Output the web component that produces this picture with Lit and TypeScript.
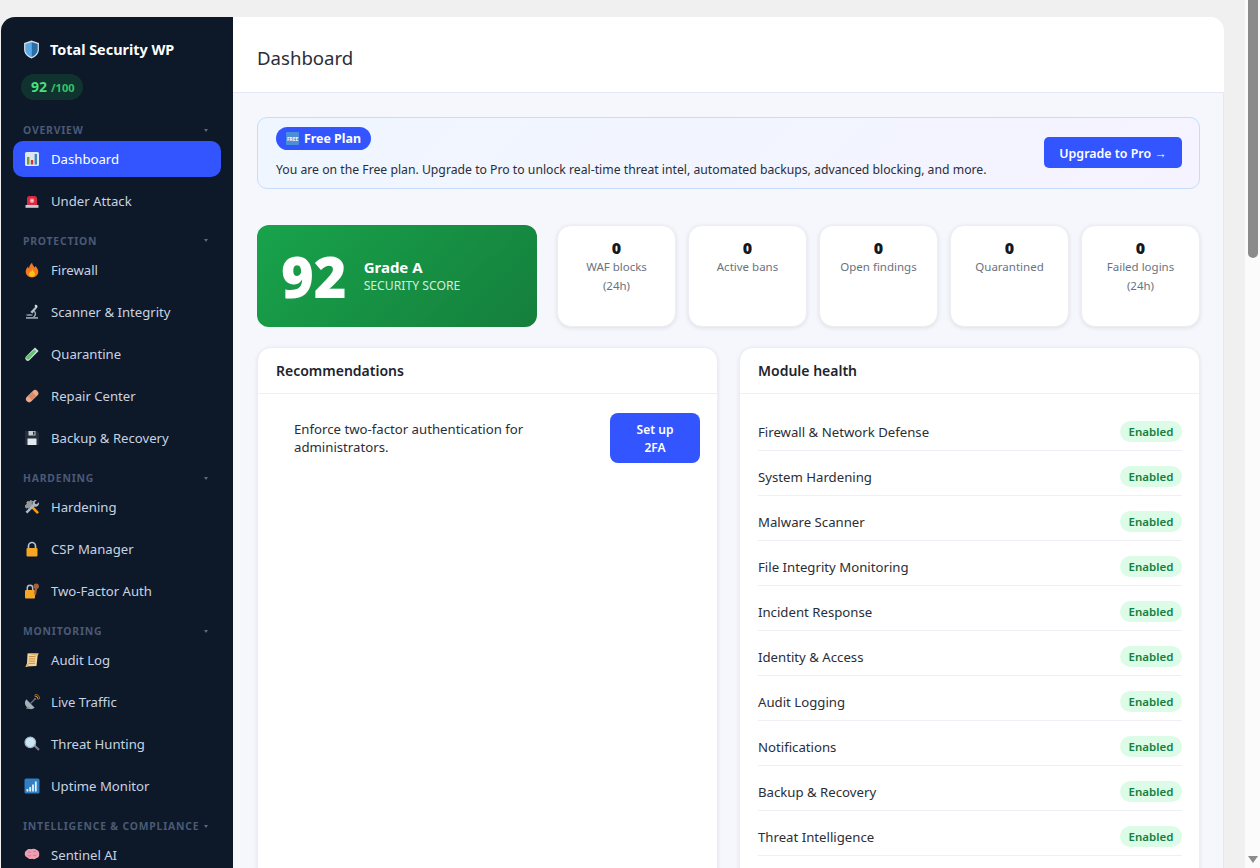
import { LitElement, html, css, svg } from 'lit';
import { customElement } from 'lit/decorators.js';

// small emoji-like icons, all on a 16x16 grid
const icons: Record<string, unknown> = {
  chart: svg`<rect x="1" y="1" width="14" height="14" rx="1.5" fill="#dfe6ee"/><rect x="3" y="6" width="2.4" height="7.5" fill="#6a9e3c"/><rect x="6.8" y="9" width="2.4" height="4.5" fill="#d9352c"/><rect x="10.6" y="3" width="2.4" height="10.5" fill="#3b88c9"/>`,
  siren: svg`<path d="M3 12V5.5A2.5 2.5 0 0 1 5.5 3h5A2.5 2.5 0 0 1 13 5.5V12z" fill="#d8293f"/><circle cx="8" cy="7.7" r="2.4" fill="#f08a97"/><circle cx="8" cy="7.7" r="1.1" fill="#fbd0d6"/><rect x="1.5" y="12" width="13" height="2.8" fill="#c5ccd3"/>`,
  fire: svg`<path d="M8 .8c.6 2.6 2 3.4 2.4 4.8.5-.4.8-1 .8-1.7 1.900 1.700 3.100 3.700 3.100 5.900 0 3.500-2.800 5.600-6.300 5.600S1.700 13.300 1.700 9.800c0-2.300 1.300-3.900 2.400-5.200.1.900.4 1.500 1 1.900C5.100 4.200 6.400 2.300 8 .8z" fill="#f4791f"/><path d="M8.100 7.200c.4 1.500 2.900 2.600 2.900 4.800 0 1.800-1.300 2.800-3 2.800s-3-1-3-2.800c0-1.400 1-2.200 1.700-3 .2.500.4.800.7 1 .1-1 .2-1.900.7-2.800z" fill="#fcc21b"/>`,
  scope: svg`<rect x="2" y="13" width="12" height="1.800" fill="#8e99a3"/><path d="M12 2l1.500 1.200-5 6.300L6.300 8z" fill="#b4bec6"/><rect x="10.800" y="1" width="2.600" height="2" transform="rotate(38 12 2)" fill="#dde3e8"/><path d="M10.500 6.500c2.200 1.800 2.300 4.700.3 6.500H8.600c2-1 3-3.500.9-5.400z" fill="#9aa5ae"/><ellipse cx="5.500" cy="11" rx="3.300" ry=".9" fill="#7d8891"/>`,
  tube: svg`<path d="M11 1.400l3.600 3.600-9 9a2.500 2.500 0 0 1-3.600-3.600z" fill="#d5dde4"/><path d="M10.500 3.500l1.800 1.800-7.300 8a2 2 0 0 1-2.700-2.700z" fill="#5fc46b"/>`,
  bandage: svg`<rect x=".6" y="5" width="14.800" height="6.400" rx="3.200" transform="rotate(-45 8 8)" fill="#f0a988"/><rect x="5" y="5.500" width="6" height="5.400" transform="rotate(-45 8 8)" fill="#d98a68"/>`,
  floppy: svg`<path d="M1 1h12l2 2v12H1z" fill="#232f3b"/><rect x="3.500" y="8.500" width="9" height="6.500" fill="#e4e9ee"/><rect x="4.500" y="1" width="7" height="4.500" fill="#c4ced6"/><rect x="9" y="1.700" width="1.500" height="3" fill="#232f3b"/>`,
  tools: svg`<path d="M2.200 3.800L4 1.800l11 11.400-1.900 1.900z" fill="#f49b1e"/><path d="M1 6.500L6.500 1l2.800 1.200-1.700 1.700 1.400 1.400L4.500 9.800l-1-1-1 1L1 8.300z" fill="#8d99a3"/><path d="M14.700 3.200l-2 2-1.600-.4-.4-1.600 2-2a3.300 3.300 0 0 0-4 4.400L1.500 12.800l1.800 1.800 7-7.100a3.300 3.300 0 0 0 4.400-4.300z" fill="#aeb9c2"/>`,
  lock: svg`<path d="M4.500 7.500V5a3.500 3.500 0 0 1 7 0v2.500" fill="none" stroke="#b7c1c9" stroke-width="1.700"/><rect x="2.500" y="7" width="11" height="8.500" rx="1" fill="#f5a623"/>`,
  lockkey: svg`<path d="M3.300 7.500V5a2.700 2.700 0 0 1 5.400 0v2.500" fill="none" stroke="#b7c1c9" stroke-width="1.500"/><rect x="1" y="7" width="10" height="8.500" rx="1" fill="#f5a623"/><circle cx="12.200" cy="3.200" r="2.700" fill="#a5603c"/><path d="M11 4.500L10 11l2 1.200 1.200-7.300z" fill="#a5603c"/>`,
  scroll: svg`<path d="M3.500 1.500h11l-.8 1.800-1.200 10.800-11 .4c1.300-1 1.400-1.800 1.500-3z" fill="#f3d59b"/><path d="M5 4.500h6.500M4.800 6.800h6.500M4.600 9.100h6.500M4.400 11.400h6.500" stroke="#c9904a"/><path d="M3.500 1.500h11l-.5 2H12" fill="#e2b56c"/><path d="M1 14.700c1-.6 1.500-1.500 1.500-3h2.300c0 1.500-.6 2.600-1.600 3z" fill="#e2b56c"/>`,
  dish: svg`<path d="M2.300 5.300a6 6 0 0 0 8.400 8.400z" fill="#a5b0b9"/><path d="M6.500 9.500l4-4" stroke="#6c7780" stroke-width="1.200"/><circle cx="11" cy="5" r="1.100" fill="#717c85"/><path d="M10.500 1.800a4 4 0 0 1 3.700 3.700" fill="none" stroke="#f0a030"/><path d="M11 .3a5 5 0 0 1 4.700 4.700" fill="none" stroke="#c9832a" stroke-width=".8"/><path d="M4 12l-2 2.800h5z" fill="#8d98a1"/>`,
  search: svg`<path d="M9.500 10l1.500-1.500 4.300 4.300a1.100 1.100 0 0 1-1.500 1.500z" fill="#78838c"/><circle cx="6.300" cy="6.300" r="5.300" fill="#c9e6f7" stroke="#aab5bd" stroke-width="1.200"/>`,
  signal: svg`<rect x=".5" y=".5" width="15" height="15" rx="1.500" fill="#2f7fc4"/><rect x="2.500" y="11" width="1.800" height="2.500" fill="#e8f1f8"/><rect x="5.300" y="9" width="1.800" height="4.500" fill="#e8f1f8"/><rect x="8.100" y="6.500" width="1.800" height="7" fill="#e8f1f8"/><rect x="10.900" y="3.500" width="1.800" height="10" fill="#e8f1f8"/>`,
  brain: svg`<path d="M2.500 3.500C4 1.800 6 2 7 2.300c1.500-.8 4-.8 5.500.5 2 .6 3 2.500 2.700 4.500.3 2-1 3.800-3 4-1.200 1.200-3 1.200-4 .5-1.600.5-3.500.2-4.500-1C1.500 10 .5 8.200.8 6.500c0-1.300.6-2.400 1.700-3z" fill="#ee9fb1"/><path d="M4 5.500c1-.8 2-.6 3 0M9 4.500c1.200-.5 2.500 0 3 1M3.500 8.500c1.200.7 2.500.5 3.500-.2M9 8c1 .8 2.300.8 3.500.2" fill="none" stroke="#c96c84" stroke-width=".8"/>`,
};

const nav = [
  { title: 'Overview', items: [['chart', 'Dashboard', true], ['siren', 'Under Attack']] },
  { title: 'Protection', items: [['fire', 'Firewall'], ['scope', 'Scanner & Integrity'], ['tube', 'Quarantine'], ['bandage', 'Repair Center'], ['floppy', 'Backup & Recovery']] },
  { title: 'Hardening', items: [['tools', 'Hardening'], ['lock', 'CSP Manager'], ['lockkey', 'Two-Factor Auth']] },
  { title: 'Monitoring', items: [['scroll', 'Audit Log'], ['dish', 'Live Traffic'], ['search', 'Threat Hunting'], ['signal', 'Uptime Monitor']] },
  { title: 'Intelligence & Compliance', items: [['brain', 'Sentinel AI']] },
];

const stats = ['WAF blocks (24h)', 'Active bans', 'Open findings', 'Quarantined', 'Failed logins (24h)'];

const modules = [
  'Firewall & Network Defense', 'System Hardening', 'Malware Scanner', 'File Integrity Monitoring',
  'Incident Response', 'Identity & Access', 'Audit Logging', 'Notifications', 'Backup & Recovery', 'Threat Intelligence',
];

@customElement('app-root')
export class AppRoot extends LitElement {
  static styles = css`
    :host {
      display: flex;
      height: 868px;
      overflow: hidden;
      background: #f0f0f0;
      font-family: "Noto Sans", "Open Sans", sans-serif;
      color: #1f2430;
    }
    .shell {
      flex: 1;
      min-width: 0;
      display: flex;
      margin: 17px 21px 0 1px;
      border-radius: 14px 14px 0 0;
      overflow: hidden;
    }
    .scrollbar {
      width: 15px;
      flex: none;
      background: #fbfbfb;
      display: flex;
      flex-direction: column;
      align-items: center;
      justify-content: space-between;
      padding-bottom: 5px;
      box-sizing: border-box;
    }
    .thumb {
      width: 10px;
      height: 258px;
      background: #8b8b8b;
      border-radius: 0 0 5px 5px;
    }
    .arrow {
      width: 0;
      height: 0;
      border-left: 5px solid transparent;
      border-right: 5px solid transparent;
      border-top: 7px solid #8b8b8b;
    }

    .sidebar {
      width: 232px;
      flex: none;
      background: #0d1829;
      padding: 23px 12px 0;
      box-sizing: border-box;
    }
    .brand {
      display: flex;
      align-items: center;
      gap: 10px;
      padding-left: 10px;
      height: 18px;
      font-size: 14.400px;
      font-weight: 700;
      color: #fff;
      white-space: nowrap;
    }
    .brand svg { width: 17px; height: 19px; }
    .score-pill {
      display: inline-flex;
      align-items: baseline;
      gap: 4px;
      margin: 16px 0 23px 8px;
      height: 26px;
      line-height: 26px;
      padding: 0 9px 0 10px;
      border-radius: 13px;
      background: #10332f;
      color: #4ade80;
      font-size: 14px;
      font-weight: 700;
    }
    .score-pill small { font-size: 11px; color: #34c46a; }
    .group {
      display: flex;
      align-items: center;
      justify-content: space-between;
      height: 14px;
      margin: 0 0 4px;
      padding: 0 13.500px 0 10px;
      font-size: 10.400px;
      font-weight: 700;
      letter-spacing: .8px;
      text-transform: uppercase;
      color: #4b5a75;
      white-space: nowrap;
    }
    .item + .group { margin-top: 14.700px; }
    .caret {
      width: 0;
      height: 0;
      border-left: 2px solid transparent;
      border-right: 2px solid transparent;
      border-top: 3px solid #5b6980;
    }
    .item {
      display: flex;
      align-items: center;
      gap: 11px;
      height: 36.100px;
      margin-bottom: 6px;
      padding-left: 11px;
      border-radius: 10px;
      font-size: 13.150px;
      color: #c8d3e2;
      white-space: nowrap;
    }
    .item svg { width: 16px; height: 16px; flex: none; }
    .item.active { background: #3355ff; color: #fff; }

    .content {
      flex: 1;
      min-width: 0;
      background: #f5f7fc;
      box-shadow: inset -1px 0 0 #e6e8f0;
    }
    .topbar {
      height: 76px;
      box-sizing: border-box;
      background: #fff;
      border-bottom: 1px solid #e5e8f0;
      display: flex;
      align-items: center;
      padding: 6px 24px 0;
      font-size: 18.600px;
      color: #2a2e37;
    }
    .main { padding: 24px 24px 0; }

    .notice {
      display: flex;
      align-items: center;
      justify-content: space-between;
      height: 72px;
      box-sizing: border-box;
      padding: 0 17px 0 18px;
      border: 1px solid #c5dcfb;
      border-radius: 10px;
      background: linear-gradient(135deg, #eff6ff, #f5f3ff);
    }
    .plan {
      display: flex;
      width: fit-content;
      align-items: center;
      gap: 5px;
      height: 23px;
      padding: 0 10px;
      border-radius: 12px;
      background: #3355ff;
      color: #fff;
      font-size: 12.400px;
      font-weight: 700;
    }
    .plan svg { width: 13px; height: 13px; }
    .notice p {
      margin: 11px 0 0;
      font-size: 12.220px;
      line-height: 18px;
      color: #2a2e37;
      white-space: nowrap;
    }
    .upgrade {
      width: 138px;
      height: 31px;
      margin-top: -1px;
      line-height: 33px;
      text-align: center;
      border-radius: 5px;
      background: #3355ff;
      color: #fff;
      font-size: 12.400px;
      font-weight: 600;
    }

    .metrics {
      display: flex;
      gap: 12px;
      margin-top: 36px;
      height: 102px;
    }
    .score {
      width: 280px;
      flex: none;
      margin-right: 8px;
      display: flex;
      align-items: center;
      gap: 17px;
      box-sizing: border-box;
      padding-left: 24px;
      border-radius: 12px;
      background: linear-gradient(135deg, #18a34b, #157f3c);
      color: #fff;
    }
    .score b {
      font-size: 56px;
      line-height: 1;
      font-weight: 900;
    }
    .grade { font-size: 15px; font-weight: 700; line-height: 18px; }
    .grade-sub { font-size: 12.200px; line-height: 18px; margin-top: 1px; color: #d3eedd; }
    .stat {
      flex: 1;
      box-sizing: border-box;
      padding: 13px 16px 0;
      text-align: center;
      background: #fff;
      border: 1px solid #eceef3;
      border-radius: 14px;
      box-shadow: 0 1px 4px rgba(0, 0, 0, .1);
    }
    .stat b { display: block; font-size: 16px; line-height: 18px; font-weight: 900; color: #14181f; }
    .stat span { display: block; font-size: 11.500px; line-height: 19px; color: #6b7280; }

    .panels {
      display: grid;
      grid-template-columns: 461px 461px;
      gap: 21px;
      margin-top: 20px;
    }
    .panel {
      background: #fff;
      border: 1px solid #eceef3;
      border-radius: 14px;
      box-shadow: 0 1px 4px rgba(0, 0, 0, .08);
      height: 640px;
    }
    .panel h3 {
      margin: 0;
      height: 46px;
      line-height: 45px;
      box-sizing: border-box;
      padding: 0 18px;
      border-bottom: 1px solid #eef0f5;
      font-size: 14px;
      font-weight: 600;
      color: #20242d;
    }
    .rec {
      display: flex;
      align-items: flex-start;
      justify-content: space-between;
      padding: 19px 17px 0 36px;
    }
    .rec p {
      margin: 7px 0 0;
      width: 270px;
      font-size: 13.200px;
      line-height: 18px;
      color: #2a2e37;
    }
    .setup {
      width: 90px;
      height: 50px;
      box-sizing: border-box;
      padding-top: 8px;
      text-align: center;
      border-radius: 8px;
      background: #3355ff;
      color: #fff;
      font-size: 12px;
      line-height: 18px;
      font-weight: 600;
    }
    .rows { padding: 12px 17px 0 18px; }
    .row {
      display: flex;
      align-items: center;
      justify-content: space-between;
      height: 45px;
      box-sizing: border-box;
      padding-top: 8px;
      border-bottom: 1px solid #eef0f5;
      font-size: 13.200px;
      color: #2a2e37;
    }
    .badge {
      width: 62px;
      height: 21px;
      margin-top: -2px;
      line-height: 21px;
      text-align: center;
      border-radius: 11px;
      background: #dcfce7;
      color: #15803d;
      font-size: 11.500px;
      font-weight: 600;
    }
  `;

  renderIcon(name: string) {
    return html`<svg viewBox="0 0 16 16">${icons[name]}</svg>`;
  }

  render() {
    return html`
      <div class="shell">
        <aside class="sidebar">
          <div class="brand">
            <svg viewBox="0 0 17 19">
              <path d="M8.500.6l7.400 2.400v6.500c0 4.300-3.200 7.300-7.400 8.900C4.300 16.800 1.100 13.800 1.100 9.500V3z" fill="#dbe3ea"/>
              <path d="M8.500 2L2.300 4v5.500c0 3.500 2.600 6 6.200 7.500z" fill="#5ba8e4"/>
              <path d="M8.500 2l6.200 2v5.500c0 3.500-2.600 6-6.200 7.500z" fill="#2a6ea8"/>
            </svg>
            Total Security WP
          </div>
          <div class="score-pill">92 <small>/100</small></div>
          ${nav.map(g => html`
            <div class="group">${g.title}<i class="caret"></i></div>
            ${g.items.map(i => html`
              <div class="item ${i[2] ? 'active' : ''}">${this.renderIcon(i[0] as string)}${i[1]}</div>
            `)}
          `)}
        </aside>
        <div class="content">
          <header class="topbar">Dashboard</header>
          <div class="main">
            <section class="notice">
              <div>
                <span class="plan">
                  <svg viewBox="0 0 13 13"><rect width="13" height="13" rx="1" fill="#4a90d9"/><text x="6.500" y="8.500" font-size="4.800" font-weight="700" text-anchor="middle" fill="#fff">FREE</text></svg>
                  Free Plan
                </span>
                <p>You are on the Free plan. Upgrade to Pro to unlock real-time threat intel, automated backups, advanced blocking, and more.</p>
              </div>
              <div class="upgrade">Upgrade to Pro →</div>
            </section>

            <section class="metrics">
              <div class="score">
                <b>92</b>
                <div>
                  <div class="grade">Grade A</div>
                  <div class="grade-sub">SECURITY SCORE</div>
                </div>
              </div>
              ${stats.map(s => html`<div class="stat"><b>0</b><span>${s}</span></div>`)}
            </section>

            <section class="panels">
              <div class="panel">
                <h3>Recommendations</h3>
                <div class="rec">
                  <p>Enforce two-factor authentication for administrators.</p>
                  <div class="setup">Set up<br />2FA</div>
                </div>
              </div>
              <div class="panel">
                <h3>Module health</h3>
                <div class="rows">
                  ${modules.map(m => html`<div class="row">${m}<span class="badge">Enabled</span></div>`)}
                </div>
              </div>
            </section>
          </div>
        </div>
      </div>
      <div class="scrollbar"><div class="thumb"></div><div class="arrow"></div></div>
    `;
  }
}
